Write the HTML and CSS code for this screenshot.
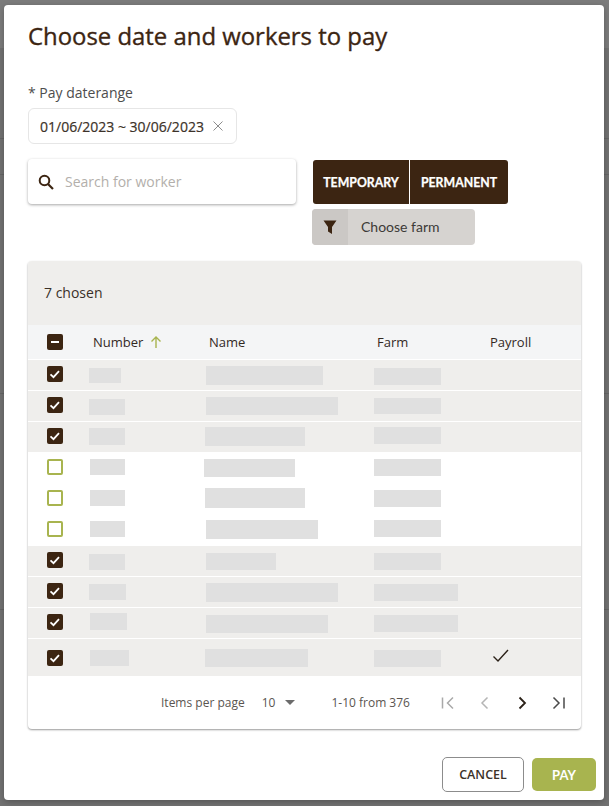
FILE: index.html
```html
<!DOCTYPE html>
<html lang="en">
<head>
<meta charset="utf-8">
<title>Choose date and workers to pay</title>
<link rel="stylesheet" href="styles.css">
</head>
<body>
<div class="backdrop">
  <i class="bband"></i>
  <i class="bline" style="top:138px"></i><i class="bline" style="top:174px"></i><i class="bline" style="top:393px"></i><i class="bline" style="top:609px"></i>
</div>
<main class="dialog">
  <h1 class="title">Choose date and workers to pay</h1>
  <label class="field-label">* Pay daterange</label>
  <div class="daterange">
    <span>01/06/2023 ~ 30/06/2023</span>
    <svg class="clear" width="12" height="12" viewBox="0 0 12 12"><path d="M1.500 1.500l9 9M10.500 1.500l-9 9" stroke="#8c8c8c" stroke-width="1" fill="none"/></svg>
  </div>
  <div class="controls">
    <div class="search">
      <svg width="18" height="18" viewBox="0 0 18 18"><circle cx="7.500" cy="7.500" r="4.800" stroke="#3c2512" stroke-width="2" fill="none"/><path d="M11 11l5 5" stroke="#3c2512" stroke-width="2.200" fill="none"/></svg>
      <span class="placeholder">Search for worker</span>
    </div>
    <div class="filters">
      <div class="toggle">
        <button class="toggle-btn t1">TEMPORARY</button>
        <button class="toggle-btn t2">PERMANENT</button>
      </div>
      <div class="farm">
        <span class="farm-icon"><svg width="14" height="14" viewBox="0 0 14 14"><path d="M.5 .5h13L9 7v7L5 11.500V7z" fill="#3c2512"/></svg></span>
        <span class="farm-text">Choose farm</span>
      </div>
    </div>
  </div>
  <section class="card">
    <div class="card-head">7 chosen</div>
    <div class="row head">
      <span class="c-check"><span class="box on"><svg width="16" height="16" viewBox="0 0 16 16"><path d="M4 8h8" stroke="#fff" stroke-width="2"/></svg></span></span>
      <span class="h-num">Number<svg width="14" height="14" viewBox="0 0 14 14"><path d="M7 13V2M2.500 6.500L7 2l4.500 4.500" stroke="#a8b44f" stroke-width="1.400" fill="none"/></svg></span>
      <span class="h-name">Name</span>
      <span class="h-farm">Farm</span>
      <span class="h-pay">Payroll</span>
    </div>

    <div class="row sel">
      <span class="c-check"><span class="box on"><svg width="16" height="16" viewBox="0 0 16 16"><path d="M3.500 8.300l3 2.800 5.500-6" stroke="#fff" stroke-width="1.800" fill="none"/></svg></span></span>
      <span class="c-num"><i class="bar" style="width:32px;height:15px;margin:8px 0 0 0"></i></span>
      <span class="c-name"><i class="bar" style="width:117px;height:19px;margin:6px 0 0 2px"></i></span>
      <span class="c-farm"><i class="bar" style="width:67px;height:17px;margin:8px 0 0 0"></i></span>
    </div>
    <div class="row sel">
      <span class="c-check"><span class="box on"><svg width="16" height="16" viewBox="0 0 16 16"><path d="M3.500 8.300l3 2.800 5.500-6" stroke="#fff" stroke-width="1.800" fill="none"/></svg></span></span>
      <span class="c-num"><i class="bar" style="width:36px;height:16px;margin:8px 0 0 0"></i></span>
      <span class="c-name"><i class="bar" style="width:132px;height:18px;margin:6px 0 0 2px"></i></span>
      <span class="c-farm"><i class="bar" style="width:67px;height:16px;margin:7px 0 0 0"></i></span>
    </div>
    <div class="row sel">
      <span class="c-check"><span class="box on"><svg width="16" height="16" viewBox="0 0 16 16"><path d="M3.500 8.300l3 2.800 5.500-6" stroke="#fff" stroke-width="1.800" fill="none"/></svg></span></span>
      <span class="c-num"><i class="bar" style="width:36px;height:17px;margin:6px 0 0 0"></i></span>
      <span class="c-name"><i class="bar" style="width:100px;height:19px;margin:5px 0 0 1px"></i></span>
      <span class="c-farm"><i class="bar" style="width:67px;height:17px;margin:5px 0 0 0"></i></span>
    </div>
    <div class="row">
      <span class="c-check"><span class="box"></span></span>
      <span class="c-num"><i class="bar" style="width:35px;height:16px;margin:6px 0 0 1px"></i></span>
      <span class="c-name"><i class="bar" style="width:91px;height:18px;margin:6px 0 0 0"></i></span>
      <span class="c-farm"><i class="bar" style="width:67px;height:17px;margin:6px 0 0 0"></i></span>
    </div>
    <div class="row">
      <span class="c-check"><span class="box"></span></span>
      <span class="c-num"><i class="bar" style="width:35px;height:16px;margin:6px 0 0 1px"></i></span>
      <span class="c-name"><i class="bar" style="width:100px;height:20px;margin:4px 0 0 1px"></i></span>
      <span class="c-farm"><i class="bar" style="width:67px;height:17px;margin:6px 0 0 0"></i></span>
    </div>
    <div class="row">
      <span class="c-check"><span class="box"></span></span>
      <span class="c-num"><i class="bar" style="width:35px;height:16px;margin:6px 0 0 1px"></i></span>
      <span class="c-name"><i class="bar" style="width:112px;height:19px;margin:5px 0 0 2px"></i></span>
      <span class="c-farm"><i class="bar" style="width:67px;height:17px;margin:5px 0 0 0"></i></span>
    </div>
    <div class="row sel">
      <span class="c-check"><span class="box on"><svg width="16" height="16" viewBox="0 0 16 16"><path d="M3.500 8.300l3 2.800 5.500-6" stroke="#fff" stroke-width="1.800" fill="none"/></svg></span></span>
      <span class="c-num"><i class="bar" style="width:36px;height:16px;margin:8px 0 0 0"></i></span>
      <span class="c-name"><i class="bar" style="width:70px;height:17px;margin:7px 0 0 2px"></i></span>
      <span class="c-farm"><i class="bar" style="width:67px;height:17px;margin:7px 0 0 0"></i></span>
    </div>
    <div class="row sel">
      <span class="c-check"><span class="box on"><svg width="16" height="16" viewBox="0 0 16 16"><path d="M3.500 8.300l3 2.800 5.500-6" stroke="#fff" stroke-width="1.800" fill="none"/></svg></span></span>
      <span class="c-num"><i class="bar" style="width:37px;height:16px;margin:7px 0 0 0"></i></span>
      <span class="c-name"><i class="bar" style="width:132px;height:19px;margin:6px 0 0 2px"></i></span>
      <span class="c-farm"><i class="bar" style="width:84px;height:17px;margin:7px 0 0 0"></i></span>
    </div>
    <div class="row sel">
      <span class="c-check"><span class="box on"><svg width="16" height="16" viewBox="0 0 16 16"><path d="M3.500 8.300l3 2.800 5.500-6" stroke="#fff" stroke-width="1.800" fill="none"/></svg></span></span>
      <span class="c-num"><i class="bar" style="width:37px;height:17px;margin:5px 0 0 1px"></i></span>
      <span class="c-name"><i class="bar" style="width:122px;height:18px;margin:7px 0 0 2px"></i></span>
      <span class="c-farm"><i class="bar" style="width:84px;height:17px;margin:7px 0 0 0"></i></span>
    </div>
    <div class="row sel last">
      <span class="c-check"><span class="box on"><svg width="16" height="16" viewBox="0 0 16 16"><path d="M3.500 8.300l3 2.800 5.500-6" stroke="#fff" stroke-width="1.800" fill="none"/></svg></span></span>
      <span class="c-num"><i class="bar" style="width:39px;height:16px;margin:11px 0 0 1px"></i></span>
      <span class="c-name"><i class="bar" style="width:103px;height:18px;margin:10px 0 0 1px"></i></span>
      <span class="c-farm"><i class="bar" style="width:67px;height:17px;margin:11px 0 0 0"></i></span>
      <span class="c-pay"><svg width="18" height="14" viewBox="0 0 18 14"><path d="M1.500 7.500l4.500 4.500L16 1" stroke="#2b2118" stroke-width="1.400" fill="none"/></svg></span>
    </div>

    <div class="pager">
      <span class="pg-label">Items per page</span>
      <span class="pg-size">10</span>
      <svg class="pg-caret" width="10" height="5" viewBox="0 0 10 5"><path d="M0 0h10L5 5z" fill="#6b6b6b"/></svg>
      <span class="pg-range">1-10 from 376</span>
      <span class="pg-nav">
        <svg width="14" height="14" viewBox="0 0 14 14"><path d="M1.500 1.500v11M12 1.500L6.500 7l5.500 5.500" stroke="#a9a9a9" stroke-width="1.500" fill="none"/></svg>
        <svg width="14" height="14" viewBox="0 0 14 14"><path d="M9.500 1.500L4 7l5.500 5.500" stroke="#b5b5b5" stroke-width="1.500" fill="none"/></svg>
        <svg width="14" height="14" viewBox="0 0 14 14"><path d="M4.500 1.500L10 7l-5.500 5.500" stroke="#2b2118" stroke-width="1.800" fill="none"/></svg>
        <svg width="14" height="14" viewBox="0 0 14 14"><path d="M1.500 1.500L7 7l-5.500 5.500M12 1.500v11" stroke="#4a4a4a" stroke-width="1.500" fill="none"/></svg>
      </span>
    </div>
  </section>
  <footer class="actions">
    <button class="btn-cancel">CANCEL</button>
    <button class="btn-pay">PAY</button>
  </footer>
</main>
</body>
</html>
```
FILE: styles.css
```css
* { box-sizing: border-box; }
html, body { margin: 0; height: 100%; }
body {
  width: 609px;
  height: 806px;
  overflow: hidden;
  background: #727272;
  font-family: "Open Sans", sans-serif;
  color: #3c2512;
  padding: 5px 5px 6px 4px;
  position: relative;
}
.backdrop { position: absolute; inset: 0; }
.bband { position: absolute; left: 0; right: 0; top: 0; height: 48px; background: #7c7c7c; }
.bline { position: absolute; left: 0; right: 0; height: 1px; background: #656565; }
.dialog {
  position: relative;
  height: 795px;
  background: #fff;
  border-radius: 4px;
  padding: 0 24px;
  box-shadow: 0 2px 6px rgba(0,0,0,.25);
  display: flex;
  flex-direction: column;
}
.title {
  margin: 13px 0 0;
  font-size: 23.900px;
  line-height: 36px;
  font-weight: 500;
  -webkit-text-stroke: .35px #3c2512;
  color: #3c2512;
}
.field-label {
  margin-top: 29px;
  font-size: 14px;
  line-height: 20px;
  color: #4d4d4d;
}
.daterange {
  margin-top: 5px;
  width: 209px;
  height: 36px;
  border: 1px solid #e6e6e6;
  border-radius: 6px;
  display: flex;
  align-items: center;
  padding-left: 11px;
  font-size: 14px;
  font-weight: 500;
  -webkit-text-stroke: .2px #3c3229;
  color: #3c3229;
}
.clear { margin-left: 8px; }
.controls { display: flex; margin-top: 15px; }
.search {
  width: 268px;
  height: 45px;
  background: #fff;
  border-radius: 4px;
  box-shadow: 0 1px 3px rgba(0,0,0,.35);
  display: flex;
  align-items: center;
  padding-left: 9px;
  gap: 10px;
}
.placeholder { font-size: 14px; color: #b3afab; }
.filters { margin-left: 16px; display: flex; flex-direction: column; }
.toggle { display: flex; margin: 1px 0 0 1px; }
.toggle-btn {
  height: 44px;
  border: 0;
  padding: 0;
  background: #3c2512;
  color: #fff;
  font-family: Lato, sans-serif;
  font-weight: 700;
  font-size: 12.300px;
  -webkit-text-stroke: .25px #fff;
}
.t1 { width: 96px; border-radius: 3px 0 0 3px; margin-right: 1px; }
.t2 { width: 98px; border-radius: 0 3px 3px 0; }
.farm {
  margin-top: 5px;
  width: 163px;
  height: 36px;
  border-radius: 4px;
  background: #d6d3d0;
  display: flex;
  align-items: center;
  overflow: hidden;
}
.farm-icon {
  width: 36px;
  height: 36px;
  background: #cbc8c5;
  display: flex;
  align-items: center;
  justify-content: center;
}
.farm-text { margin-left: 13px; padding-bottom: 2px; font-family: Lato, sans-serif; font-size: 14px; color: #3d3a37; }
.card {
  margin-top: 16px;
  width: 553px;
  border-radius: 4px;
  box-shadow: 0 1px 2px rgba(0,0,0,.4);
  background: #fff;
}
.card-head {
  height: 64px;
  background: #efeeec;
  border-radius: 4px 4px 0 0;
  padding: 0 16px 1px;
  display: flex;
  align-items: center;
  font-size: 14px;
  color: #3a3028;
}
.row {
  height: 31px;
  display: grid;
  grid-template-columns: 61px 115px 170px 116px 1fr;
  font-size: 13px;
  color: #33291f;
}
.row.sel { background: #efeeec; border-bottom: 1px solid #fff; }
.row.last { height: 37px; border-bottom: 0; }
.row.head {
  height: 35px;
  background: #f4f5f6;
  border-bottom: 1px solid #fff;
  align-items: center;
  grid-template-columns: 61px 115px 168px 113px 1fr;
}
.c-check { display: flex; padding: 6px 0 0 19px; }
.head .c-check { padding-top: 0; }
.last .c-check { padding-top: 11px; }
.box {
  width: 16px;
  height: 16px;
  border-radius: 2px;
  border: 2px solid #a8b44f;
  display: block;
}
.box.on { background: #3c2512; border: 0; }
.box svg { display: block; }
.bar { display: block; background: #e0e0e0; }
.h-num { padding-left: 4px; display: flex; align-items: center; gap: 6px; }
.h-name { padding-left: 5px; }
.h-farm { padding-left: 5px; }
.h-pay { padding-left: 5px; }
.c-pay { padding: 10px 0 0 2px; }
.c-pay svg { display: block; }
.pager {
  height: 53px;
  display: flex;
  align-items: center;
  font-size: 12px;
  color: #5a5550;
  padding-left: 133px;
}
.pg-size { margin-left: 17px; color: #5a5550; }
.pg-caret { margin-left: 10px; }
.pg-range { margin-left: 36px; }
.pg-nav { margin-left: 31px; display: flex; gap: 23px; }
.actions { display: flex; justify-content: flex-end; gap: 8px; margin: 28px -16px 0 0; align-items: center; }
.btn-cancel {
  width: 82px;
  height: 35px;
  background: #fff;
  border: 1px solid #8c8c8c;
  border-radius: 5px;
  font-family: "Open Sans", sans-serif;
  font-weight: 600;
  font-size: 12.500px;
  color: #3c3229;
}
.btn-pay {
  width: 64px;
  height: 33px;
  background: #a8b44f;
  border: 0;
  border-radius: 5px;
  color: #fff;
  font-family: Lato, sans-serif;
  font-weight: 700;
  font-size: 13px;
}
```
